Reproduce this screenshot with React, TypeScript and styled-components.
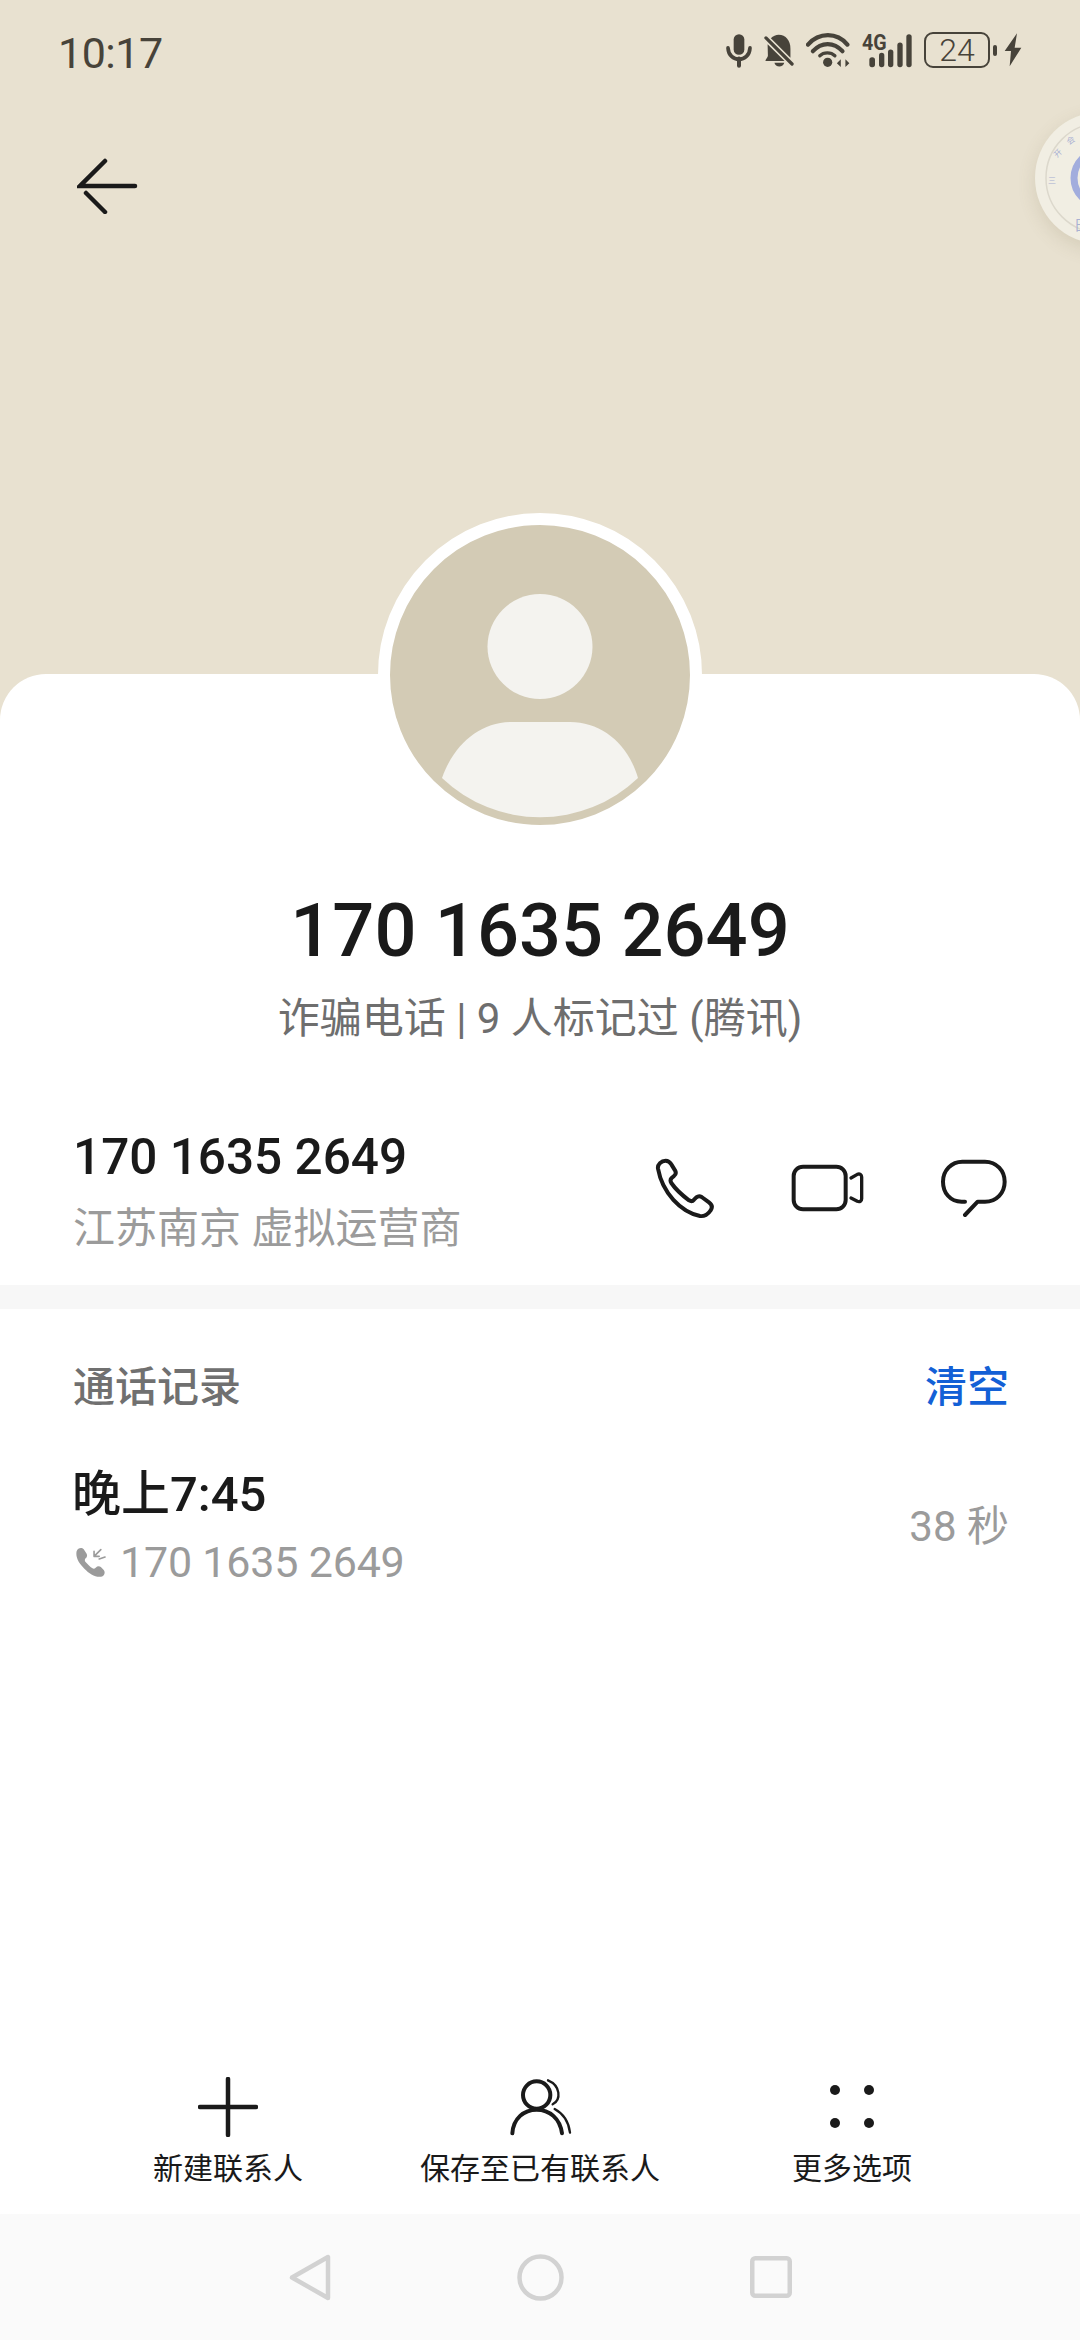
import React from 'react';
import styled, { createGlobalStyle } from 'styled-components';

const GlobalStyle = createGlobalStyle`
  html, body {
    margin: 0;
    padding: 0;
    background: #fff;
  }
  body {
    font-family: Roboto, "Noto Sans CJK SC", sans-serif;
  }
`;

const Page = styled.div`
  position: relative;
  width: 1080px;
  height: 2340px;
  overflow: hidden;
  display: flex;
  flex-direction: column;
  background: #e8e1d0;
`;

const Header = styled.header`
  height: 674px;
  flex-shrink: 0;
  display: flex;
  flex-direction: column;
`;

const StatusBar = styled.div`
  height: 100px;
  padding: 0 58px;
  display: flex;
  align-items: center;
  justify-content: space-between;
  color: #47433a;
`;

const Clock = styled.span`
  font-size: 43px;
  letter-spacing: -0.5px;
  line-height: 100px;
  padding-top: 5px;
`;

const StatusIcons = styled.div`
  display: flex;
  align-items: center;
  gap: 12px;
`;

const BatteryGroup = styled.div`
  display: flex;
  align-items: center;
`;

const BatteryBody = styled.div`
  box-sizing: border-box;
  width: 66px;
  height: 36px;
  border: 2.5px solid #47433a;
  border-radius: 9px;
  display: flex;
  align-items: center;
  justify-content: center;
  font-size: 32px;
  font-weight: 300;
  line-height: 1;
  color: #47433a;
`;

const BatteryNub = styled.div`
  width: 4px;
  height: 11px;
  margin-left: 3px;
  margin-right: 7px;
  border-radius: 2px;
  background: #47433a;
`;

const BackButton = styled.button`
  align-self: flex-start;
  margin: 58px 0 0 77px;
  padding: 0;
  border: 0;
  background: none;
  display: flex;
`;

const FloatBall = styled.div`
  position: absolute;
  top: 112px;
  left: 1035px;
  width: 132px;
  height: 132px;
  border-radius: 50%;
  background: #f1eee3;
  box-shadow: 0 6px 18px rgba(120, 105, 70, 0.16);
`;

const Card = styled.main`
  flex: 1;
  display: flex;
  flex-direction: column;
  background: #fff;
  border-radius: 46px 46px 0 0;
`;

const Avatar = styled.div`
  box-sizing: border-box;
  width: 324px;
  height: 324px;
  margin: -161px auto 0;
  border: 12px solid #fff;
  border-radius: 50%;
  background: #d3cbb5;
  display: flex;
`;

const Title = styled.h1`
  margin: 54px 0 0;
  font-size: 74px;
  font-weight: 500;
  line-height: 80px;
  text-align: center;
  color: #1a1a1a;
`;

const Subtitle = styled.p`
  margin: 20px 0 0;
  font-size: 42px;
  line-height: 56px;
  text-align: center;
  color: #6e6e6e;
`;

const NumberRow = styled.section`
  height: 156px;
  margin-top: 82px;
  padding: 0 72px 0 73px;
  display: flex;
  align-items: flex-start;
  justify-content: space-between;
`;

const NumberText = styled.div`
  display: flex;
  flex-direction: column;
`;

const PhoneNumber = styled.span`
  font-size: 49.5px;
  font-weight: 500;
  line-height: 56px;
  color: #1a1a1a;
`;

const Location = styled.span`
  margin-top: 16px;
  font-size: 42px;
  line-height: 56px;
  color: #9b9b9b;
`;

const ContactActions = styled.div`
  display: flex;
  align-items: center;
  margin-top: 28px;
  gap: 75px;
`;

const Divider = styled.div`
  height: 24px;
  background: #f7f7f7;
`;

const HistoryHead = styled.div`
  margin-top: 51px;
  padding: 0 71px 0 73px;
  display: flex;
  align-items: center;
  justify-content: space-between;
`;

const HistoryTitle = styled.span`
  font-size: 42px;
  font-weight: 500;
  line-height: 56px;
  color: #707070;
`;

const ClearLink = styled.span`
  font-size: 42px;
  font-weight: 500;
  line-height: 56px;
  color: #1360d6;
`;

const CallRow = styled.div`
  margin-top: 49px;
  padding: 0 71px 0 72px;
  display: flex;
  align-items: center;
  justify-content: space-between;
`;

const CallInfo = styled.div`
  display: flex;
  flex-direction: column;
`;

const CallTime = styled.span`
  font-size: 49px;
  font-weight: 500;
  line-height: 60px;
  color: #1a1a1a;
`;

const CallNumber = styled.span`
  margin-top: 9px;
  padding-left: 3px;
  display: flex;
  align-items: center;
  gap: 14px;
  font-size: 43px;
  line-height: 56px;
  letter-spacing: -0.2px;
  color: #9b9b9b;
`;

const Duration = styled.span`
  margin-top: -2px;
  font-size: 42px;
  line-height: 56px;
  color: #9b9b9b;
`;

const Actions = styled.nav`
  margin-top: auto;
  padding: 0 72px 25px;
  display: grid;
  grid-template-columns: repeat(3, 312px);
`;

const ActionButton = styled.div`
  display: flex;
  flex-direction: column;
  align-items: center;
`;

const ActionIcon = styled.div`
  height: 60px;
  display: flex;
  align-items: center;
  justify-content: center;
`;

const ActionLabel = styled.span`
  margin-top: 12px;
  font-size: 30px;
  line-height: 40px;
  color: #1a1a1a;
`;

const NavBar = styled.div`
  height: 126px;
  display: flex;
  align-items: center;
  justify-content: center;
  gap: 186px;
  background: #fafafa;
`;

const MicIcon = () => (
  <svg width="26" height="35" viewBox="138 103 78 102" fill="none" stroke="#47433a">
    <rect x="161" y="105" width="32" height="62" rx="16" fill="#47433a" stroke="none" />
    <path d="M144 146C146 192 208 192 210 146" strokeWidth="11" strokeLinecap="round" />
    <path d="M177 178V200" strokeWidth="12" strokeLinecap="round" />
  </svg>
);

const BellOffIcon = () => (
  <svg width="30" height="34" viewBox="251 102 92 102" fill="none">
    <path d="M262 135L314 187H256C254 183 262 178 263 170Z" fill="#47433a" />
    <path d="M272 117C279 110 287 106 296 106C318 106 332 124 332 148V177Z" fill="#47433a" />
    <path d="M283 192C285 207 311 207 313 192Z" fill="#47433a" />
    <path d="M257 116L337 196" stroke="#47433a" strokeWidth="10" strokeLinecap="round" />
  </svg>
);

const WifiIcon = () => (
  <svg width="44" height="35" viewBox="378 98 134 106" fill="none" stroke="#47433a" strokeLinecap="round">
    <path d="M384 133C418 95 472 95 504 133" strokeWidth="13" />
    <path d="M399 153C425 124 463 124 489 153" strokeWidth="13" />
    <path d="M420 167C432 155 454 155 466 167" strokeWidth="10" />
    <circle cx="444" cy="187" r="14" fill="#47433a" stroke="none" />
    <path d="M472 190L484 178V201ZM498 178L510 190L498 201Z" fill="#47433a" stroke="none" />
  </svg>
);

const SignalIcon = () => (
  <svg width="50" height="35" viewBox="546 99 150 104" fill="#47433a" overflow="visible">
    <text x="546" y="150" fontFamily="Roboto" fontWeight="700" fontSize="64" textLength="74" lengthAdjust="spacingAndGlyphs">
      4G
    </text>
    <rect x="568" y="171" width="17" height="30" rx="8" />
    <rect x="597" y="158" width="16" height="43" rx="8" />
    <rect x="624" y="148" width="16" height="53" rx="8" />
    <rect x="652" y="127" width="16" height="74" rx="8" />
    <rect x="679" y="102" width="16" height="99" rx="8" />
  </svg>
);

const BoltIcon = () => (
  <svg width="18" height="34" viewBox="972 101 52 102" fill="#47433a">
    <path d="M1010 102L973 155H992L988 201L1023 145H1003Z" />
  </svg>
);

const BackArrow = () => (
  <svg width="62" height="56" viewBox="0 0 62 56" fill="none" stroke="#1a1a1a" strokeWidth="4.5" strokeLinecap="round">
    <path d="M28 3L3 28H58" />
    <path d="M9 35L28 54" />
  </svg>
);

// clipped rim of the assistant bubble parked on the screen edge
const BallFace = () => (
  <svg width="132" height="132" viewBox="0 0 132 132" fill="none">
    <circle cx="66" cy="66" r="55" stroke="#dcd8cc" strokeWidth="1.5" />
    <circle cx="66" cy="66" r="27" stroke="#a2addd" strokeWidth="7" />
    <g fill="#a9b1d2" fontFamily="Noto Sans CJK SC" fontSize="8">
      <text x="22" y="46" transform="rotate(-45 22 46)">开</text>
      <text x="34" y="33" transform="rotate(-35 34 33)">会</text>
      <text x="13" y="71">三</text>
    </g>
    <text x="39" y="118" fill="#a9b1d2" fontFamily="Noto Sans CJK SC" fontSize="14">日</text>
  </svg>
);

const AvatarFigure = () => (
  <svg width="300" height="300" viewBox="0 0 300 300">
    <circle cx="150" cy="121.5" r="52.5" fill="#f4f3ef" />
    <path
      d="M52 253C64 219 90 197 122 197H180C212 197 238 219 248 253A142 142 0 0 1 52 253Z"
      fill="#f4f3ef"
    />
  </svg>
);

const PhoneIcon = () => (
  <svg width="62" height="62" viewBox="100 113 186 186" fill="none" stroke="#1a1a1a" strokeWidth="12" strokeLinejoin="round">
    <path d="M112 148C110 135 122 124 135 124C142 124 148 128 152 135L163 153C167 160 165 166 160 170L153 176C149 180 149 186 152 191C165 210 185 228 205 243C210 246 216 246 220 241L227 234C232 230 238 230 243 233L265 249C273 255 276 264 270 273C263 285 250 292 238 290C180 278 125 220 112 148Z" />
  </svg>
);

const VideoIcon = () => (
  <svg width="74" height="48" viewBox="514 134 222 144" fill="none" stroke="#1a1a1a" strokeWidth="12" strokeLinejoin="round">
    <rect x="522" y="142" width="156" height="128" rx="28" />
    <path d="M694 176L713 165C720 162 726 166 726 173V238C726 245 720 249 713 246L694 236" strokeWidth="10" strokeLinecap="round" />
  </svg>
);

const ChatIcon = () => (
  <svg width="68" height="58" viewBox="955 124 204 174" fill="none" stroke="#1a1a1a" strokeWidth="12" strokeLinecap="round" strokeLinejoin="round">
    <path d="M1030 252H1020C985 252 964 225 964 192C964 158 990 132 1022 132H1090C1125 132 1149 160 1149 192C1149 225 1125 252 1090 252H1068L1030 292" />
  </svg>
);

const MissedCallIcon = () => (
  <svg width="31" height="31" viewBox="103 613 96 96" fill="none">
    <path
      d="M108 626C112 615 124 613 130 620L139 634C142 640 140 645 135 649C133 652 133 656 135 659C142 667 149 674 157 679C161 681 164 680 167 677C172 672 178 671 183 675L192 684C198 691 194 703 184 705C166 708 147 695 132 680C115 663 104 645 108 626Z"
      fill="#9b9b9b"
    />
    <path d="M183 621L162 642M162 626V642H178" stroke="#9b9b9b" strokeWidth="5" strokeLinecap="round" strokeLinejoin="round" />
    <path d="M196 644L178 650" stroke="#9b9b9b" strokeWidth="5" strokeLinecap="round" />
  </svg>
);

const PlusIcon = () => (
  <svg width="60" height="60" viewBox="0 0 60 60" fill="none" stroke="#1a1a1a" strokeWidth="4.5" strokeLinecap="round">
    <path d="M2 30H58M30 2V58" />
  </svg>
);

const ExistingContactIcon = () => (
  <svg width="64" height="60" viewBox="1134 76 192 180" fill="none" stroke="#1a1a1a" strokeLinecap="round">
    <circle cx="1220" cy="130" r="41" strokeWidth="12" />
    <path d="M1147 245C1150 200 1182 174 1220 174C1258 174 1290 200 1296 245" strokeWidth="12" />
    <path d="M1254 86C1292 102 1294 144 1268 158" strokeWidth="7" />
    <path d="M1274 172C1300 186 1316 210 1320 243" strokeWidth="7" />
  </svg>
);

const MoreIcon = () => (
  <svg width="44" height="44" viewBox="0 0 44 44" fill="#1a1a1a">
    <circle cx="5" cy="5" r="5" />
    <circle cx="39" cy="5" r="5" />
    <circle cx="5" cy="38" r="5" />
    <circle cx="39" cy="38" r="5" />
  </svg>
);

const NavBack = () => (
  <svg width="42" height="47" viewBox="0 0 42 47" fill="none" stroke="#d2d2d2" strokeWidth="4.5" strokeLinejoin="round">
    <path d="M3 23.5L39 3V44Z" />
  </svg>
);

const NavHome = () => (
  <svg width="47" height="47" viewBox="0 0 47 47" fill="none" stroke="#d2d2d2" strokeWidth="4.5">
    <circle cx="23.5" cy="23.5" r="21" />
  </svg>
);

const NavRecents = () => (
  <svg width="42" height="42" viewBox="0 0 42 42" fill="none" stroke="#d2d2d2" strokeWidth="4.5">
    <rect x="2.25" y="2.25" width="37.5" height="37.5" rx="3" />
  </svg>
);

const App: React.FC = () => {
  return (
    <Page>
      <GlobalStyle />
      <Header>
        <StatusBar>
          <Clock>10:17</Clock>
          <StatusIcons>
            <MicIcon />
            <BellOffIcon />
            <WifiIcon />
            <SignalIcon />
            <BatteryGroup>
              <BatteryBody>24</BatteryBody>
              <BatteryNub />
              <BoltIcon />
            </BatteryGroup>
          </StatusIcons>
        </StatusBar>
        <BackButton>
          <BackArrow />
        </BackButton>
      </Header>
      <FloatBall>
        <BallFace />
      </FloatBall>
      <Card>
        <Avatar>
          <AvatarFigure />
        </Avatar>
        <Title>170 1635 2649</Title>
        <Subtitle>诈骗电话 | 9 人标记过 (腾讯)</Subtitle>
        <NumberRow>
          <NumberText>
            <PhoneNumber>170 1635 2649</PhoneNumber>
            <Location>江苏南京 虚拟运营商</Location>
          </NumberText>
          <ContactActions>
            <PhoneIcon />
            <VideoIcon />
            <ChatIcon />
          </ContactActions>
        </NumberRow>
        <Divider />
        <HistoryHead>
          <HistoryTitle>通话记录</HistoryTitle>
          <ClearLink>清空</ClearLink>
        </HistoryHead>
        <CallRow>
          <CallInfo>
            <CallTime>晚上7:45</CallTime>
            <CallNumber>
              <MissedCallIcon />
              170 1635 2649
            </CallNumber>
          </CallInfo>
          <Duration>38 秒</Duration>
        </CallRow>
        <Actions>
          <ActionButton>
            <ActionIcon>
              <PlusIcon />
            </ActionIcon>
            <ActionLabel>新建联系人</ActionLabel>
          </ActionButton>
          <ActionButton>
            <ActionIcon>
              <ExistingContactIcon />
            </ActionIcon>
            <ActionLabel>保存至已有联系人</ActionLabel>
          </ActionButton>
          <ActionButton>
            <ActionIcon>
              <MoreIcon />
            </ActionIcon>
            <ActionLabel>更多选项</ActionLabel>
          </ActionButton>
        </Actions>
        <NavBar>
          <NavBack />
          <NavHome />
          <NavRecents />
        </NavBar>
      </Card>
    </Page>
  );
};

export default App;
